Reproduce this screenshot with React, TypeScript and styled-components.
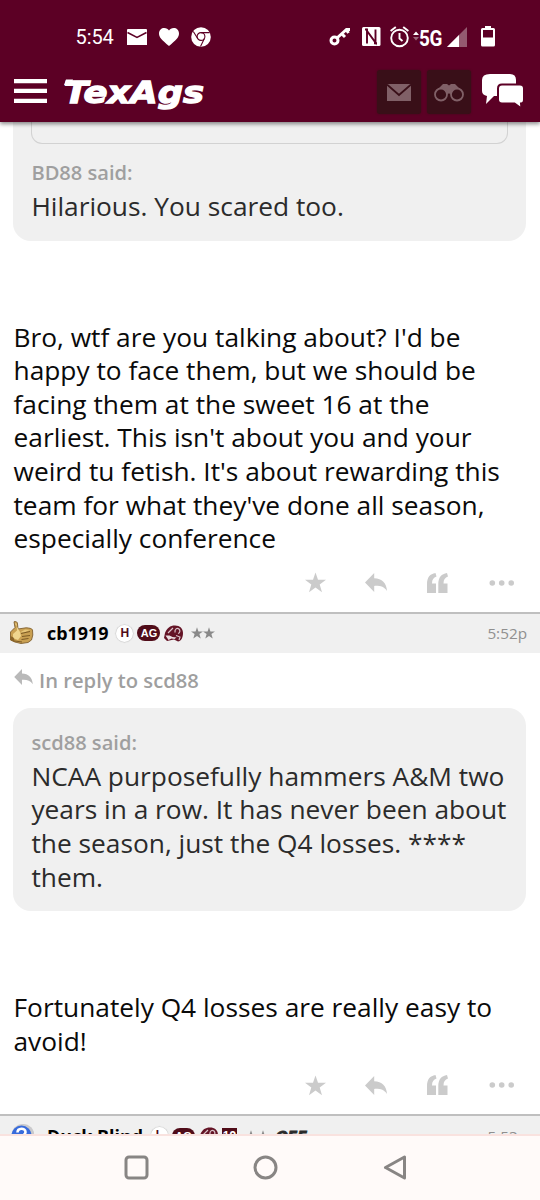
import React from 'react';
import styled, { createGlobalStyle } from 'styled-components';

const Global = createGlobalStyle`
  * { box-sizing: border-box; }
  html, body { margin: 0; padding: 0; background: #fff; }
  body { font-family: "Open Sans", "Noto Sans", sans-serif; color: #0c0c0c; }
  svg { display: block; flex: none; }
`;

const Screen = styled.div`
  width: 540px;
  height: 1200px;
  display: flex;
  flex-direction: column;
  overflow: hidden;
  background: #fff;
`;

const Header = styled.header`
  flex: none;
  height: 122px;
  background: #5c0025;
  z-index: 1;
  box-shadow: 0 2px 4px rgba(0, 0, 0, 0.45);
`;

const StatusBar = styled.div`
  height: 62px;
  padding: 11px 44px 0 75.5px;
  display: flex;
  align-items: center;
  color: #fff;
`;

const Clock = styled.span`
  width: 51px;
  font: 400 20px/24px Roboto, sans-serif;
  letter-spacing: -0.1px;
`;

const StatusGroup = styled.div<{ $gap: number; $right?: boolean }>`
  display: flex;
  align-items: center;
  gap: ${(p) => p.$gap}px;
  margin-left: ${(p) => (p.$right ? 'auto' : 0)};
`;

const Network = styled.span`
  width: 24px;
  margin: 4px 4px 0 -1px;
  font: 700 22px/22px Roboto, sans-serif;
  letter-spacing: -0.4px;
  transform: scaleX(0.86);
  transform-origin: left;
`;

const NavBar = styled.div`
  height: 60px;
  padding: 0 15px 0 14px;
  display: flex;
  align-items: center;
`;

const Logo = styled.svg`
  margin: 2px 0 0 16px;
  overflow: visible;
  font: italic 700 31px "DejaVu Sans", sans-serif;
`;

const NavActions = styled.div`
  margin-left: auto;
  display: flex;
  align-items: center;
  gap: 6px;
`;

const NavTile = styled.span`
  position: relative;
  width: 44px;
  height: 44px;
  border-radius: 3px;
  background: #390f18;
  box-shadow: 0 0 2px #390f18;
  display: flex;
  align-items: center;
  justify-content: center;
`;

const ChatIcon = styled.svg`
  margin: 0 0 2px 4px;
`;

const Feed = styled.main`
  flex: none;
  height: 1012px;
  overflow: hidden;
`;

const Quote = styled.blockquote<{ $clipped?: boolean }>`
  margin: 0 13.6px 0 13.4px;
  padding: ${(p) => (p.$clipped ? '0 18px 17px' : '21px 18px 17px')};
  border-radius: ${(p) => (p.$clipped ? '0 0 18px 18px' : '18px')};
  background: #f0f0f0;
`;

const NestedQuote = styled.div`
  height: 21.5px;
  margin-bottom: 15.5px;
  border: 1.5px solid #d2d2d2;
  border-top: 0;
  border-radius: 0 0 11px 11px;
`;

const QuoteAuthor = styled.div`
  font-size: 20.1px;
  line-height: 28px;
  font-weight: 600;
  color: #9f9f9f;
  margin-bottom: 3px;
`;

const Text = styled.div<{ $quoted?: boolean }>`
  font-size: 26.3px;
  line-height: 33.6px;
  white-space: pre;
  color: ${(p) => (p.$quoted ? '#2b2b2b' : '#0a0a0a')};
`;

const Body = styled.div`
  padding: 80px 13.5px 0;
`;

const Actions = styled.div`
  height: 56px;
  padding: 0 25px 2px 0;
  display: flex;
  align-items: center;
  justify-content: flex-end;
  color: #cbcbcb;
`;

const Action = styled.span<{ $gap?: number }>`
  margin-left: ${(p) => p.$gap ?? 0}px;
`;

const UserRow = styled.div`
  height: 41px;
  padding: 0 13px 0 9px;
  display: flex;
  align-items: center;
  background: #f0f0f0;
  border-top: 2px solid #bfbfbf;
`;

const UserName = styled.span`
  margin: 0 8px 0 13px;
  font-size: 17.9px;
  line-height: 24px;
  font-weight: 700;
  color: #000;
`;

const Badges = styled.div`
  display: flex;
  align-items: center;
  gap: 4px;
`;

const Badge = styled.span<{ $kind: 'round' | 'pill' | 'square' }>`
  height: ${(p) => (p.$kind === 'round' ? 17 : 16)}px;
  width: ${(p) => (p.$kind === 'round' ? 17 : p.$kind === 'pill' ? 23 : 15)}px;
  border-radius: ${(p) => (p.$kind === 'square' ? 0 : 9)}px;
  background: ${(p) => (p.$kind === 'round' ? '#fff' : '#500c19')};
  color: ${(p) => (p.$kind === 'round' ? '#500c19' : '#fff')};
  box-shadow: ${(p) => (p.$kind === 'round' ? '0 0 1px 0.5px #c4c4c4' : 'none')};
  font: 700 ${(p) => (p.$kind === 'pill' ? 11 : 12)}px/16.5px "Liberation Sans", sans-serif;
  text-align: center;
`;

const Time = styled.span`
  margin-left: auto;
  font-size: 15.3px;
  line-height: 22px;
  color: #8f8f8f;
`;

const ReplyTo = styled.div`
  height: 55px;
  padding: 0 14px 1px;
  display: flex;
  align-items: center;
  gap: 6px;
  font-size: 20.2px;
  line-height: 28px;
  font-weight: 600;
  color: #9f9f9f;
`;

const ReplyMark = styled.span`
  padding-bottom: 5px;
  color: #b9b9b9;
`;

const Shield = styled.span`
  margin-left: 7px;
  font: italic 700 14px/16px "DejaVu Sans", sans-serif;
  -webkit-text-stroke: 0.8px #2a2a2a;
  color: #2a2a2a;
`;

const SystemNav = styled.nav`
  flex: none;
  height: 66px;
  border-top: 2px solid #f9e2df;
  background: #fffaf9;
  padding-left: 123px;
  display: flex;
  align-items: center;
  gap: 102px;
`;

const ReplyIcon = ({ w = 22, h = 19 }: { w?: number; h?: number }) => (
  <svg width={w} height={h} viewBox="0 0 22 19" fill="currentColor">
    <path d="M0 9.5 9.2 0v5.2C17 5.4 21.6 10 22 18c-3-4.4-7-5.4-12.8-5.1V19z" />
  </svg>
);

const Star = ({ size = 21 }: { size?: number }) => (
  <svg width={size} height={size} viewBox="0 0 21 20" fill="currentColor">
    <path d="M10.5 0 13 7.2h8l-6.3 4.7 2.3 7.8-6.5-4.6L4 19.7l2.3-7.8L0 7.2h8z" />
  </svg>
);

const PostActions = () => (
  <Actions>
    <Action><Star /></Action>
    <Action $gap={39}><ReplyIcon /></Action>
    <Action $gap={40}>
      <svg width="21" height="20" viewBox="0 0 21 20" fill="currentColor">
        <path d="M8.500 0 9.500 3.500C6.500 4.500 5 6.500 5 10.500h4V20H0v-9C0 4.500 3 .8 8.500 0zM20 0l1 3.500c-3 1-4.500 3-4.500 7h4V20h-9.200v-9c0-6.500 3.200-10.200 8.700-11z" />
      </svg>
    </Action>
    <Action $gap={41}>
      <svg width="26" height="6" viewBox="0 0 26 6" fill="currentColor">
        <circle cx="3.300" cy="3" r="2.800" /><circle cx="12.700" cy="3" r="2.800" /><circle cx="22.200" cy="3" r="2.800" />
      </svg>
    </Action>
  </Actions>
);

const Helmet = () => (
  <svg width="19" height="17" viewBox="0 0 19 17">
    <path d="M1 8C3 3 6 .5 11 .5c5 0 8 3 8 7.500 0 5-2 8-5 8.500l-4-2-7 1.500-3-3z" fill="#641426" />
    <path d="M1.500 10.500h4l3 1.500 4 .5-2 1.500-3-.5-3 1.500z" fill="#eadfe1" />
    <path d="M11 7.500C10.500 4 13 2.500 15 4c1.500 1.500 1 4-1 4.500M4 8l5-5M12 10.500l4 1.500-1 3" fill="none" stroke="#d9c3c9" strokeWidth="1.200" />
  </svg>
);

const Thumb = () => (
  <svg width="25" height="24" viewBox="0 0 25 24">
    <path d="M5 .8c2-.8 3.500.2 3.500 2.200L9 8l8-1.200c3 .2 6 .5 6.500 2.200l.3 5-1.300 5-3.500 2.500-7 1-6-1.500-4.500-2V11l4.500-4.500z" fill="#c9a052" stroke="#806030" strokeWidth=".9" />
    <path d="M6 2.500h1.500l.5 7-4 3.500v4l5 2 3-4-1-4" fill="#efd58e" />
    <path d="M11 11.500l5-3 5 .5-6 2.500z" fill="#e5c579" />
    <path d="M12 12.500l9-2M13 15.500l8-1M12.500 18.500l7-1M6 20l7 1" stroke="#7c5a24" strokeWidth="1" fill="none" />
    <path d="M1.500 15v4l5 2.500-2-5z" fill="#8a6429" />
  </svg>
);

const Question = () => (
  <svg width="25" height="25" viewBox="0 0 25 25">
    <circle cx="14" cy="12.500" r="11.500" fill="#c9c9cc" />
    <circle cx="12.500" cy="12.500" r="10" fill="#376bdc" />
    <path d="M8.500 9.500c0-5 8-5 8-.5 0 3-3.500 3-3.500 6" fill="none" stroke="#fff" strokeWidth="2.600" />
    <circle cx="13" cy="18.500" r="1.600" fill="#fff" />
  </svg>
);

const Stars = styled.span`
  display: flex;
  gap: 0;
  margin-left: 4px;
  color: #8a8a8a;
`;

const App = () => (
  <Screen>
    <Global />
    <Header>
      <StatusBar>
        <Clock>5:54</Clock>
        <StatusGroup $gap={12}>
          <svg width="20" height="16" viewBox="0 0 20 16">
            <path d="M1 0h18a1 1 0 0 1 1 1v15H0V1a1 1 0 0 1 1-1z" fill="#fff" />
            <path d="M.5 3.500 10 8.500l9.500-5" fill="none" stroke="#5c0025" strokeWidth="1.500" />
          </svg>
          <svg width="20" height="18" viewBox="0 0 20 18" fill="#fff">
            <path d="M10 18C3 12 0 9.500 0 5.500 0 2 2.500 0 5.200 0 7.500 0 9 1 10 2.500 11 1 12.500 0 14.800 0 17.500 0 20 2 20 5.500c0 4-3 6.500-10 12.500z" />
          </svg>
          <svg width="20" height="20" viewBox="0 0 20 20">
            <circle cx="10" cy="10" r="9.800" fill="#fff" />
            <g fill="none" stroke="#5c0025" strokeWidth="1.100">
              <circle cx="10" cy="9.500" r="3.900" />
              <path d="M10 5.600h8.700M6.700 11.500 2.300 4.500M13.400 11.500 9.500 19.500" />
            </g>
          </svg>
        </StatusGroup>
        <StatusGroup $gap={0} $right>
          <svg width="33" height="22" viewBox="0 0 33 22" fill="none" stroke="#fff" strokeWidth="3">
            <circle cx="5.500" cy="14.500" r="3.500" />
            <path d="m8 12 9.500-8.500h3.500M12.500 7.500l3.500 3.500M17 3.500l2.500 3.500" />
          </svg>
          <svg width="28" height="22" viewBox="0 0 28 22">
            <rect x="0" y="1" width="18.500" height="19" rx="1.500" fill="#fff" />
            <path d="M5 17.500V5l8.500 11.500V3.500M3 3.500h3M12 17.300h3" fill="none" stroke="#5c0025" strokeWidth="1.900" />
          </svg>
          <svg width="30" height="22" viewBox="0 0 30 22" fill="none" stroke="#fff" strokeWidth="1.900">
            <circle cx="9.500" cy="12" r="8.300" />
            <path d="M9.500 7v5.500l3 2.500M.6 5 5.800 1M18.400 5 13.200 1" />
            <path d="m23 9 3-3.500L29 9z" fill="#fff" stroke="none" />
            <path d="m23 11 3 3.500 3-3.500z" fill="#9a6579" stroke="none" />
          </svg>
          <Network>5G</Network>
          <svg width="34" height="22" viewBox="0 0 34 22">
            <path d="M20 1v20H0z" fill="#945a70" />
            <path d="M12 9v12H0z" fill="#fff" />
          </svg>
          <svg width="15" height="22" viewBox="0 0 15 22">
            <path d="M4 0h6v2h2.500a1.500 1.500 0 0 1 1.500 1.500v15.500a1.500 1.500 0 0 1-1.500 1.500h-11A1.500 1.500 0 0 1 0 19v-15.500A1.500 1.500 0 0 1 1.500 2H4z" fill="#fff" />
            <path d="M2 4h10v7.500H2z" fill="#5c0025" />
          </svg>
        </StatusGroup>
      </StatusBar>
      <NavBar>
        <svg width="33" height="27" viewBox="0 0 33 27" fill="#fff">
          <path d="M0 0h33v4.300H0zM0 9.800h33v4.300H0zM0 19.800h33v4.300H0z" />
        </svg>
        <Logo width="141" height="31" viewBox="0 0 141 31">
          <text x="1" y="24.500" textLength="140" lengthAdjust="spacingAndGlyphs" fill="#fff" stroke="#fff" strokeWidth="1.300">TexAgs</text>
          <path d="M3 1.500h7l-2 5.500H1z" fill="#fff" />
        </Logo>
        <NavActions>
          <NavTile>
            <svg width="24" height="17" viewBox="0 0 24 17">
              <path d="M0 0h24v17H0z" fill="#806067" />
              <path d="m0 .5 12 10.500L24 .5" fill="none" stroke="#390f18" strokeWidth="1.800" />
            </svg>
          </NavTile>
          <NavTile>
            <svg width="30" height="19" viewBox="0 0 30 19">
              <path d="M2 8 9 1h4l2 1.500L17 1h4l7 7-6 4-7-1.500L8 12z" fill="#806067" />
              <g fill="#390f18" stroke="#806067" strokeWidth="1.800">
                <circle cx="7" cy="11.500" r="6" /><circle cx="23" cy="11.500" r="6" />
              </g>
            </svg>
          </NavTile>
          <ChatIcon width="44" height="36" viewBox="1.500 0 43 36">
            <path d="M10 1h20q6 0 6 6v11q0 5-5 5H14L6 31l1-8q-5-1-5-5V7q0-6 8-6z" fill="#fff" />
            <path d="M22 11.500h18q4 0 4 4v11q0 4-3 4l.5 5-7-5H22q-4 0-4-4v-11q0-4 4-4z" fill="#fff" stroke="#5c0025" strokeWidth="2" />
          </ChatIcon>
        </NavActions>
      </NavBar>
    </Header>
    <Feed>
      <Quote $clipped>
        <NestedQuote />
        <QuoteAuthor>BD88 said:</QuoteAuthor>
        <Text $quoted>Hilarious. You scared too.</Text>
      </Quote>
      <Body>
        <Text>{"Bro, wtf are you talking about? I'd be\nhappy to face them, but we should be\nfacing them at the sweet 16 at the\nearliest. This isn't about you and your\nweird tu fetish. It's about rewarding this\nteam for what they've done all season,\nespecially conference"}</Text>
      </Body>
      <PostActions />
      <UserRow>
        <Thumb />
        <UserName>cb1919</UserName>
        <Badges>
          <Badge $kind="round">H</Badge>
          <Badge $kind="pill">AG</Badge>
          <Helmet />
          <Stars><Star size={12} /><Star size={12} /></Stars>
        </Badges>
        <Time>5:52p</Time>
      </UserRow>
      <ReplyTo><ReplyMark><ReplyIcon w={19} h={16} /></ReplyMark>In reply to scd88</ReplyTo>
      <Quote>
        <QuoteAuthor>scd88 said:</QuoteAuthor>
        <Text $quoted>{'NCAA purposefully hammers A&M two\nyears in a row. It has never been about\nthe season, just the Q4 losses. ****\nthem.'}</Text>
      </Quote>
      <Body>
        <Text>{'Fortunately Q4 losses are really easy to\navoid!'}</Text>
      </Body>
      <PostActions />
      <UserRow>
        <Question />
        <UserName>Duck Blind</UserName>
        <Badges>
          <Badge $kind="round">L</Badge>
          <Badge $kind="pill">AG</Badge>
          <Helmet />
          <Badge $kind="square">19</Badge>
          <Stars><Star size={12} /><Star size={12} /></Stars>
        </Badges>
        <Shield>OFF</Shield>
        <Time>5:53p</Time>
      </UserRow>
    </Feed>
    <SystemNav>
      <svg width="27" height="26" viewBox="0 0 27 26" fill="none" stroke="#888584" strokeWidth="3">
        <rect x="3" y="2" width="21" height="21" rx="3" />
      </svg>
      <svg width="27" height="26" viewBox="0 0 27 26" fill="none" stroke="#888584" strokeWidth="3">
        <circle cx="13.500" cy="12.500" r="10.500" />
      </svg>
      <svg width="27" height="26" viewBox="0 0 27 26" fill="none" stroke="#888584" strokeWidth="3" strokeLinejoin="round">
        <path d="M23.500 2v21L4.500 12.500z" />
      </svg>
    </SystemNav>
  </Screen>
);

export default App;
